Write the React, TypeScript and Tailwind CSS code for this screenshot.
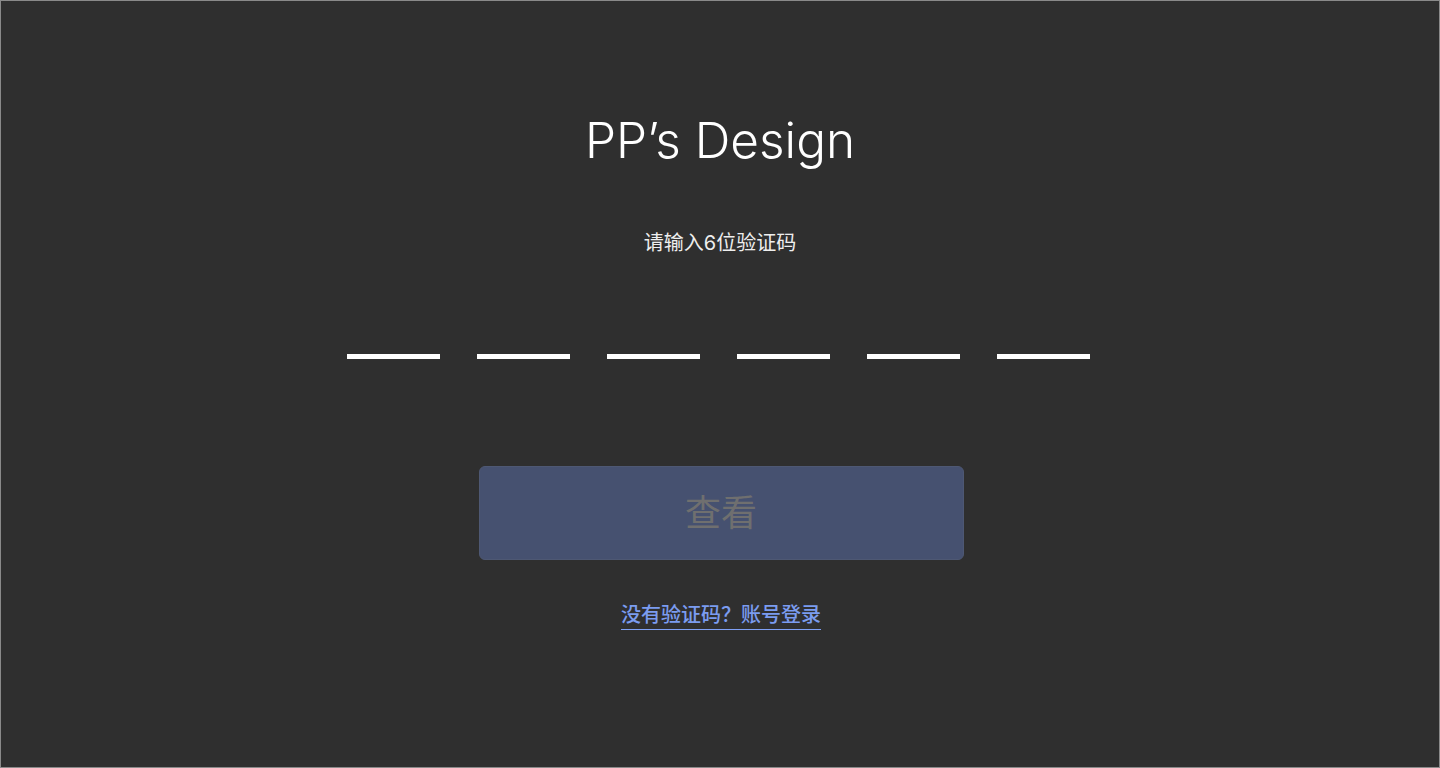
const cells = [0, 1, 2, 3, 4, 5];

export default function App() {
  return (
    <div
      className="flex h-screen w-full flex-col items-center border border-[#8a8a8a] bg-[#2f2f2f]"
      style={{ fontFamily: 'Inter, "Noto Sans CJK SC", sans-serif' }}
    >
      <h1 className="mt-[107px] text-[49.5px] font-light leading-[64px] text-white">PP’s Design</h1>
      <p className="mt-[57px] text-[20px] leading-[28px] text-[#eeeeee]">请输入6位验证码</p>

      <div className="mt-[97px] flex gap-[37px] pr-[3px]">
        {cells.map((i) => (
          <div key={i} className="h-[5px] w-[93px] bg-white" />
        ))}
      </div>

      <button className="mt-[107px] ml-[2px] flex h-[94px] w-[485px] items-center justify-center rounded-md border border-[#4e5873] bg-[#465170] text-[36px] text-[#6f6f6f]">
        查看
      </button>

      <a className="mt-[42px] ml-[2px] border-b border-[#7fa0f5] pb-[1px] text-[20px] font-medium leading-[26px] text-[#7b9cf0]">
        没有验证码？账号登录
      </a>
    </div>
  );
}
